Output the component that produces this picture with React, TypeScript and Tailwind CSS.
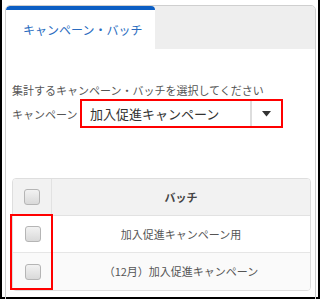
import React from "react";

const font = { fontFamily: '"Noto Sans CJK JP", "Noto Sans", sans-serif' };

function Checkbox() {
  return (
    <div className="w-[16px] h-[16px] rounded-[3px] border border-[#b5b5b5] bg-gradient-to-b from-[#f2f2f2] to-[#d9d9d9]" />
  );
}

export default function App() {
  return (
    <div className="w-[322px] h-[299px] bg-white overflow-hidden" style={font}>
      <div className="w-[320px] h-[299px] border-l-2 border-r-2 border-b-2 border-black pl-[3px] pt-[5px]">
        <div className="w-[311px] h-[300px] border border-[#cfcfcf] rounded-t-[5px] overflow-hidden">
          {/* header */}
          <div className="h-[43px] bg-[#eeeeee] flex">
            <div className="w-[149px] h-[43px] bg-white border-t-[4px] border-[#0b5ec4] rounded-t-[4px] flex items-center pl-[17px]">
              <span className="text-[12px] leading-none text-[#2a6cc0] tracking-[0px]">キャンペーン・バッチ</span>
            </div>
          </div>
          {/* content */}
          <div className="px-[6px] pt-[33px] relative">
            <div className="text-[11px] leading-[16px] text-[#555] whitespace-nowrap">
              集計するキャンペーン・バッチを選択してください
            </div>
            <div className="flex items-center mt-[1px]">
              <span className="text-[11px] leading-[16px] text-[#555] w-[68px] whitespace-nowrap">キャンペーン</span>
              <div className="w-[203px] h-[29px] border-2 border-[#f00] flex items-stretch">
                <div className="flex-1 flex items-center pl-[8px] text-[13px] text-[#333] whitespace-nowrap">
                  加入促進キャンペーン
                </div>
                <div className="w-[2px] bg-[#dddddd]" />
                <div className="w-[29px] flex items-center justify-center">
                  <svg width="9" height="6" viewBox="0 0 9 6">
                    <path d="M0 0 H9 L4.5 5.5 Z" fill="#333" />
                  </svg>
                </div>
              </div>
            </div>
            {/* table */}
            <div className="mt-[50px] w-[299px] border border-[#dedede] rounded-[4px] overflow-hidden">
              <div className="flex h-[37px] bg-[#f2f2f2] border-b border-[#e2e2e2]">
                <div className="w-[39px] border-r border-[#e2e2e2] flex items-center justify-center">
                  <Checkbox />
                </div>
                <div className="flex-1 flex items-center justify-center text-[11px] font-bold text-[#444]">
                  バッチ
                </div>
              </div>
              <div className="flex h-[37px] bg-white border-b border-[#e6e6e6]">
                <div className="w-[39px] flex items-center justify-center">
                  <Checkbox />
                </div>
                <div className="flex-1 flex items-center justify-center text-[11px] text-[#555] whitespace-nowrap">
                  加入促進キャンペーン用
                </div>
              </div>
              <div className="flex h-[37px] bg-[#fafafa]">
                <div className="w-[39px] flex items-center justify-center">
                  <Checkbox />
                </div>
                <div className="flex-1 flex items-center justify-center text-[11px] text-[#555] whitespace-nowrap">
                  （12月）加入促進キャンペーン
                </div>
              </div>
            </div>
            <div className="absolute left-[4px] top-[165px] w-[43px] h-[76px] border-2 border-[#f00] pointer-events-none" />
          </div>
        </div>
      </div>
    </div>
  );
}
